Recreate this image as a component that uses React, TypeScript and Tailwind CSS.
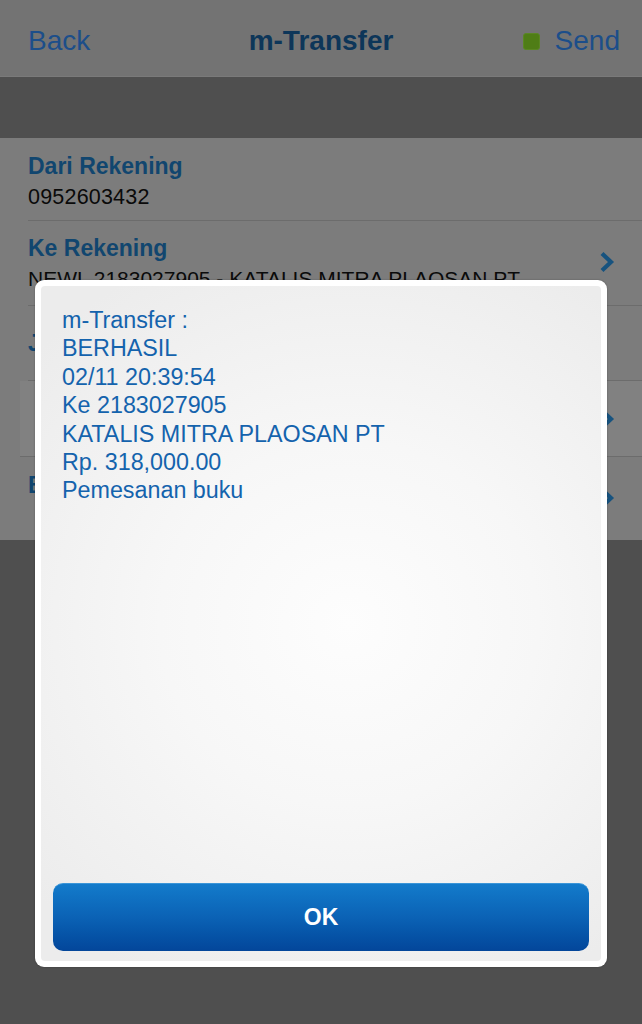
import React from "react";

function Chevron({ className = "" }: { className?: string }) {
  return (
    <svg width="16" height="22" viewBox="0 0 16 22" className={className}>
      <path d="M3 2.5 L12 11 L3 19.5" fill="none" stroke="#17537f" strokeWidth="4.2" strokeLinejoin="miter" />
    </svg>
  );
}

export default function App() {
  const lines = [
    "m-Transfer :",
    "BERHASIL",
    "02/11 20:39:54",
    "Ke 2183027905",
    "KATALIS MITRA PLAOSAN PT",
    "Rp. 318,000.00",
    "Pemesanan buku",
  ];
  return (
    <div className="relative w-[642px] h-[1024px] bg-[#4f4f4f] overflow-hidden font-['Liberation_Sans',Arial,sans-serif]">
      {/* Header */}
      <div className="h-[77px] bg-[#737373] grid grid-cols-[1fr_auto_1fr] items-center pt-[6px] border-b border-[#7a7a7a]">
        <div className="pl-[28px] text-[28px] leading-none text-[#1c4e8a]">Back</div>
        <div className="text-[28px] font-bold leading-none text-[#0d3659]">m-Transfer</div>
        <div className="flex items-center justify-end gap-[15px] pr-[22px]">
          <div className="w-[17px] h-[17px] rounded-[3px] bg-[#4f7d16] border border-[#5a8723]" />
          <div className="text-[28px] leading-none text-[#1c4e8a]">Send</div>
        </div>
      </div>
      {/* dark band */}
      <div className="h-[61px] bg-[#4f4f4f]" />
      {/* list */}
      <div className="bg-[#7c7c7c]">
        <div className="ml-[28px] h-[83px] border-b border-[#6c6c6c] flex flex-col pt-[14px]">
          <div className="text-[23px] font-bold leading-[28px] text-[#11466f]">Dari Rekening</div>
          <div className="text-[21.5px] leading-[34px] text-[#0a0a0a] tracking-[0.2px]">0952603432</div>
        </div>
        <div className="ml-[28px] h-[85px] border-b border-[#6c6c6c] flex items-center justify-between pr-[27px]">
          <div className="flex flex-col self-start pt-[13px]">
            <div className="text-[23px] font-bold leading-[28px] text-[#11466f]">Ke Rekening</div>
            <div className="text-[21px] leading-[34px] text-[#0a0a0a]">NEWL 2183027905 - KATALIS MITRA PLAOSAN PT</div>
          </div>
          <Chevron className="-mt-[2px]" />
        </div>
        <div className="ml-[28px] h-[75px] border-b border-[#6c6c6c] flex items-center">
          <div className="text-[23px] font-bold leading-[28px] text-[#11466f]">Jumlah</div>
        </div>
        <div className="h-[76px] pl-[20px]">
          <div className="h-full bg-[#818181] border-b border-[#6c6c6c] flex items-center justify-end pr-[27px]">
            <Chevron />
          </div>
        </div>
        <div className="ml-[28px] h-[83px] flex items-center justify-between pr-[27px]">
          <div className="text-[23px] font-bold leading-[28px] text-[#11466f] -mt-[28px]">Berita</div>
          <Chevron className="-mt-[2px]" />
        </div>
      </div>

      {/* Dialog overlay */}
      <div className="absolute left-[35px] top-[280px] w-[572px] h-[687px] bg-white rounded-[9px] p-[6px] shadow-[0_0_2px_rgba(0,0,0,0.3)]">
        <div className="h-full rounded-[4px] flex flex-col px-[12px] pb-[10px] bg-[radial-gradient(ellipse_75%_60%_at_55%_50%,#fdfdfd_0%,#f7f7f7_45%,#ececec_100%)]">
          <div className="pt-[20px] pl-[9px] flex flex-col text-[23.3px] leading-[28.4px] text-[#1463ad]">
            {lines.map((l) => (
              <div key={l}>{l}</div>
            ))}
          </div>
          <div className="flex-1" />
          <button className="h-[68px] w-full rounded-[10px] bg-linear-to-b from-[#137bcb] via-[#0b62b5] to-[#03469a] border-t border-[#3a95d8] flex items-center justify-center text-white text-[23px] font-bold">
            OK
          </button>
        </div>
      </div>
    </div>
  );
}
